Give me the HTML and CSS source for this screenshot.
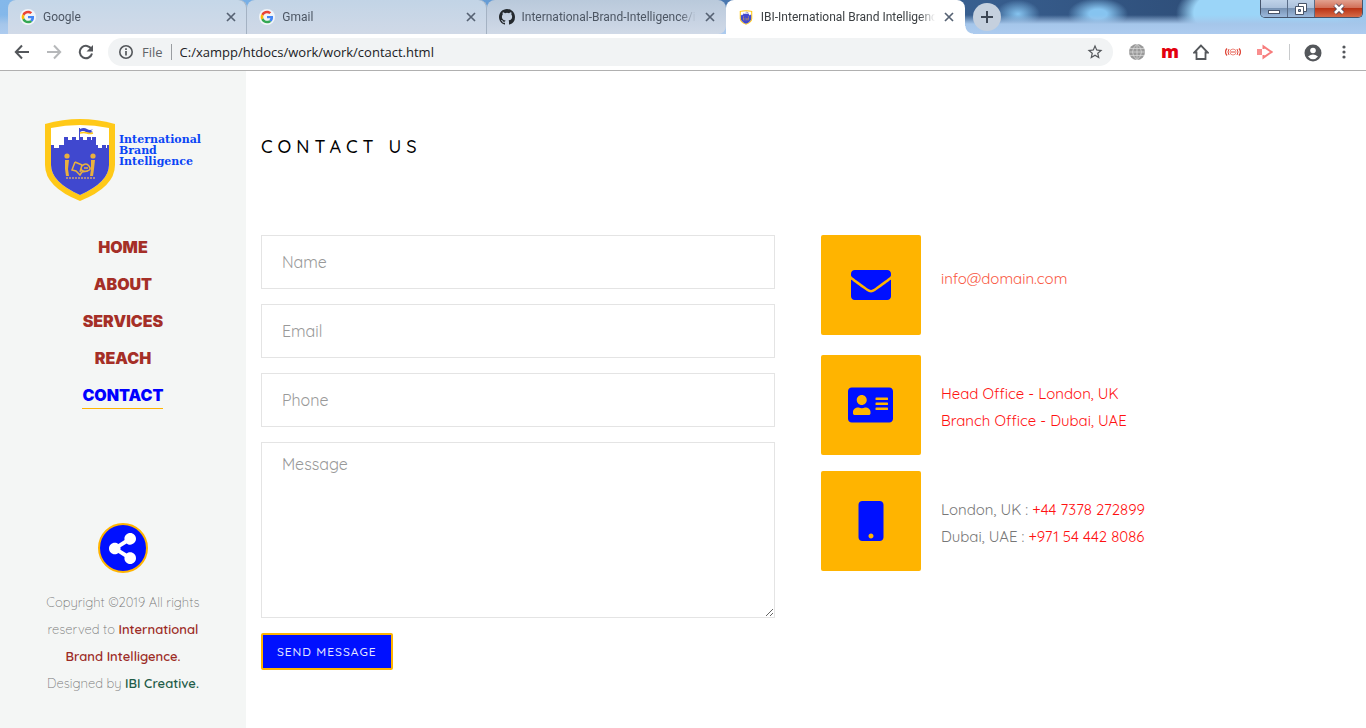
FILE: index.html
```html
<!DOCTYPE html>
<html lang="en">
<head>
<meta charset="utf-8">
<title>IBI-International Brand Intelligence</title>
<link rel="stylesheet" href="styles.css">
</head>
<body>
<svg class="defs" aria-hidden="true">
  <symbol id="google" viewBox="0 0 48 48">
    <circle cx="24" cy="24" r="24" fill="#fff" fill-opacity=".75"/>
    <g transform="translate(5 5) scale(.79)">
    <path fill="#EA4335" d="M24 9.5c3.54 0 6.71 1.22 9.21 3.6l6.85-6.85C35.9 2.38 30.47 0 24 0 14.62 0 6.51 5.38 2.56 13.22l7.98 6.19C12.43 13.72 17.74 9.5 24 9.5z"/>
    <path fill="#4285F4" d="M46.98 24.55c0-1.57-.15-3.09-.38-4.55H24v9.02h12.94c-.58 2.96-2.26 5.48-4.78 7.18l7.73 6c4.51-4.18 7.09-10.36 7.09-17.65z"/>
    <path fill="#FBBC05" d="M10.53 28.59c-.48-1.45-.76-2.99-.76-4.59s.27-3.14.76-4.59l-7.98-6.19C.92 16.46 0 20.12 0 24c0 3.88.92 7.54 2.56 10.78l7.97-6.19z"/>
    <path fill="#34A853" d="M24 48c6.48 0 11.93-2.13 15.89-5.81l-7.73-6c-2.15 1.45-4.92 2.3-8.16 2.3-6.26 0-11.57-4.22-13.47-9.91l-7.98 6.19C6.51 42.62 14.62 48 24 48z"/>
    </g>
  </symbol>
  <symbol id="close" viewBox="0 0 10 10"><path d="M1 1l8 8M9 1L1 9" fill="none" stroke="currentColor" stroke-width="1.7"/></symbol>
  <symbol id="shield" viewBox="0 0 70 84">
    <path d="M0 6Q18 1 35 1T70 6V47Q70 69 35 83Q0 69 0 47Z" fill="#ffc918"/>
    <path d="M6 10Q20 7 35 7T64 10V47Q64 64 35 77Q6 64 6 47Z" fill="#fff"/>
    <path d="M6 27h3v3h5v-3h5v-8h4v3h4v-3h4v3h3v-3h4v3h4v-3h4v3h1v-3h4v8h2v3h4v-3h4v3h1v-3h2V47Q64 64 35 77Q6 64 6 47Z" fill="#4048cf"/>
    <path d="M34 10h1v10h-1zM35 11q4-2 7 0t6 0l-2 2 2 1q-4 2-7 0t-6 0z" fill="#4048cf"/>
    <path d="M35 15q4-1 7 0t6 0" fill="none" stroke="#ffc918" stroke-width="1.4"/>
    <g fill="#e9b13e"><circle cx="22" cy="38" r="2.6"/><circle cx="48" cy="38" r="2.6"/>
    <path d="M20 42h4l-1 9 1 7h-3l-1-7zM46 42h4l-1 9-1 7h-3l1-7z"/></g>
    <path d="M30 44l-3 8 4 1 4 4 2-3 6-1M30 44l7 3-2 7M37 48q4-4 7 0t-2 5-6-2M39 50h4" fill="none" stroke="#e9b13e" stroke-width="1.5"/>
    <path d="M21 60h29" stroke="#a98a8e" stroke-width="2" stroke-dasharray="2 1"/>
  </symbol>
</svg>

<header class="browser">
  <div class="tabstrip">
    <div class="tabs">
      <div class="tab"><svg class="favicon"><use href="#google"/></svg><span class="tab-title">Google</span><button class="tab-close" aria-label="Close tab"><svg><use href="#close"/></svg></button></div>
      <div class="tab"><svg class="favicon"><use href="#google"/></svg><span class="tab-title">Gmail</span><button class="tab-close" aria-label="Close tab"><svg><use href="#close"/></svg></button></div>
      <div class="tab"><svg class="favicon" viewBox="0 0 16 16"><path fill="#24292e" d="M8 0C3.58 0 0 3.58 0 8c0 3.54 2.29 6.53 5.47 7.59.4.07.55-.17.55-.38 0-.19-.01-.82-.01-1.49-2.01.37-2.53-.49-2.69-.94-.09-.23-.48-.94-.82-1.13-.28-.15-.68-.52-.01-.53.63-.01 1.08.58 1.23.82.72 1.21 1.87.87 2.33.66.07-.52.28-.87.51-1.07-1.78-.2-3.64-.89-3.64-3.95 0-.87.31-1.59.82-2.15-.08-.2-.36-1.02.08-2.12 0 0 .67-.21 2.2.82a7.6 7.6 0 0 1 4 0c1.53-1.04 2.2-.82 2.2-.82.44 1.1.16 1.92.08 2.12.51.56.82 1.27.82 2.15 0 3.07-1.87 3.75-3.65 3.95.29.25.54.73.54 1.48 0 1.07-.01 1.93-.01 2.2 0 .21.15.46.55.38A8.01 8.01 0 0 0 16 8c0-4.42-3.58-8-8-8z"/></svg><span class="tab-title">International-Brand-Intelligence/i</span><button class="tab-close" aria-label="Close tab"><svg><use href="#close"/></svg></button></div>
      <div class="tab tab-active"><svg class="favicon"><use href="#shield"/></svg><span class="tab-title">IBI-International Brand Intelligence</span><button class="tab-close" aria-label="Close tab"><svg><use href="#close"/></svg></button></div>
    </div>
    <button class="new-tab" aria-label="New tab"><svg viewBox="0 0 12 12"><path d="M6 0v12M0 6h12" stroke="#3c4654" stroke-width="2"/></svg></button>
    <div class="window-controls">
      <button class="win" aria-label="Minimize"><svg viewBox="0 0 14 12"><rect x="1.500" y="7.500" width="11" height="3" fill="#fff" stroke="#485468"/></svg></button>
      <button class="win" aria-label="Restore"><svg viewBox="0 0 14 12"><path d="M4.500.5h8v8h-8z" fill="#fff" stroke="#485468"/><path d="M1.500 3.500h8v8h-8z" fill="#fff" stroke="#485468"/><path d="M4.500 6.500h2v2h-2z" fill="#90a8c4" stroke="#485468"/></svg></button>
      <button class="win win-close" aria-label="Close"><svg viewBox="0 0 14 12"><path d="M3 2l8 8M11 2l-8 8" stroke="#55495a" stroke-width="4.500"/><path d="M3 2l8 8M11 2l-8 8" stroke="#fff" stroke-width="2.600"/></svg></button>
    </div>
  </div>
  <div class="toolbar">
    <button class="tool" aria-label="Back"><svg viewBox="0 0 16 16"><path d="M15 8H2M8 1.500L1.800 8 8 14.500" fill="none" stroke="#54575b" stroke-width="2"/></svg></button>
    <button class="tool" aria-label="Forward"><svg viewBox="0 0 16 16"><path d="M1 8h13M8 1.500L14.200 8 8 14.500" fill="none" stroke="#b6b8ba" stroke-width="2"/></svg></button>
    <button class="tool" aria-label="Reload"><svg viewBox="0 0 16 16"><path d="M13.500 5.200A6.200 6.200 0 1 0 14 9.500" fill="none" stroke="#54575b" stroke-width="2"/><path d="M15 1v6.500H8.500z" fill="#54575b"/></svg></button>
    <div class="omnibox">
      <svg class="info" viewBox="0 0 16 16"><circle cx="8" cy="8" r="6.200" fill="none" stroke="#54575b" stroke-width="1.600"/><path d="M8 7v4.500M8 4.300v1.700" stroke="#54575b" stroke-width="1.700"/></svg>
      <span class="scheme">File</span>
      <input class="url" type="text" aria-label="Address" value="C:/xampp/htdocs/work/work/contact.html">
      <button class="star" aria-label="Bookmark"><svg viewBox="0 0 24 24"><path fill="#54575b" d="M22 9.240l-7.190-.62L12 2 9.190 8.630 2 9.240l5.460 4.730L5.820 21 12 17.270 18.180 21l-1.630-7.030L22 9.240zM12 15.400l-3.760 2.270 1-4.280-3.320-2.880 4.380-.38L12 6.100l1.710 4.040 4.380.38-3.320 2.880 1 4.280L12 15.400z"/></svg></button>
    </div>
    <div class="extensions">
      <button class="tool" aria-label="Globe"><svg viewBox="0 0 16 16"><circle cx="8" cy="8" r="8" fill="#999"/><path d="M0 8h16M8 0v16M1 4.500h14M1 11.500h14M8 0Q-1 8 8 16M8 0q9 8 0 16" fill="none" stroke="#d6d6d6" stroke-width=".8"/></svg></button>
      <button class="tool ext-m" aria-label="m extension">m</button>
      <button class="tool" aria-label="Home"><svg viewBox="0 0 16 16"><path d="M8 1.500L1.200 8.500H3.500V15h9V8.500h2.300z" fill="none" stroke="#54575b" stroke-width="1.800"/></svg></button>
      <button class="tool" aria-label="Broadcast"><svg viewBox="0 0 16 16"><g fill="none" stroke="#e04a3c"><circle cx="8" cy="8" r="3" stroke="#ee8a80"/><path d="M6 8h4M4 5q-2 3 0 6M12 5q2 3 0 6" stroke="#e04a3c"/><path d="M2 4.500q-3 3.500 0 7M14 4.500q3 3.500 0 7" stroke-width="1.300"/></g></svg></button>
      <button class="tool" aria-label="Video"><svg viewBox="0 0 16 16"><path d="M0 5h5v6H0z" fill="#f98e8e"/><path d="M6.500 5V2.500L14.500 8l-8 5.500V11" fill="none" stroke="#f77c7c" stroke-width="2"/></svg></button>
      <span class="divider"></span>
      <button class="tool tool-profile" aria-label="Profile"><svg viewBox="0 0 18 18"><circle cx="9" cy="9" r="8.500" fill="#54575b"/><circle cx="9" cy="6.500" r="2.800" fill="#fff"/><path d="M4 12.500q5-4 10 0-2 2.700-5 2.700t-5-2.700z" fill="#fff"/></svg></button>
      <button class="tool" aria-label="Menu"><svg viewBox="0 0 16 16" fill="#54575b"><circle cx="8" cy="3" r="1.600"/><circle cx="8" cy="8" r="1.600"/><circle cx="8" cy="13" r="1.600"/></svg></button>
    </div>
  </div>
</header>

<div class="page">
  <aside class="sidebar">
    <a class="logo" href="#"><svg class="logo-mark"><use href="#shield"/></svg><span class="logo-text">International<br>Brand<br>Intelligence</span></a>
    <nav class="menu">
      <a href="#">HOME</a>
      <a href="#">ABOUT</a>
      <a href="#">SERVICES</a>
      <a href="#">REACH</a>
      <a class="current" href="#">CONTACT</a>
    </nav>
    <button class="share" aria-label="Share"><svg viewBox="0 0 448 512"><path fill="#fff" d="M352 320c-22.608 0-43.387 7.819-59.790 20.895l-102.486-64.054a96.551 96.551 0 0 0 0-41.683l102.486-64.054C308.613 184.181 329.392 192 352 192c53.019 0 96-42.981 96-96S405.019 0 352 0s-96 42.981-96 96c0 7.158.790 14.130 2.276 20.841L155.790 180.895C139.387 167.819 118.608 160 96 160c-53.019 0-96 42.981-96 96s42.981 96 96 96c22.608 0 43.387-7.819 59.790-20.895l102.486 64.054A96.301 96.301 0 0 0 256 416c0 53.019 42.981 96 96 96s96-42.981 96-96-42.981-96-96-96z"/></svg></button>
    <p class="copyright">Copyright ©2019 All rights<br>reserved to <a class="brand" href="#">International<br>Brand Intelligence.</a><br>Designed by <a class="designer" href="#">IBI Creative.</a></p>
  </aside>

  <main class="content">
    <h1 class="title">CONTACT US</h1>
    <div class="columns">
      <form class="form">
        <input class="field" type="text" placeholder="Name" aria-label="Name">
        <input class="field" type="email" placeholder="Email" aria-label="Email">
        <input class="field" type="tel" placeholder="Phone" aria-label="Phone">
        <textarea class="field message" placeholder="Message" aria-label="Message"></textarea>
        <button class="send" type="button">SEND MESSAGE</button>
      </form>
      <div class="details">
        <section class="detail detail-mail">
          <div class="tile"><svg class="icon" viewBox="0 0 512 512"><path d="M502.300 190.800c3.900-3.100 9.700-.2 9.700 4.700V400c0 26.500-21.500 48-48 48H48c-26.500 0-48-21.500-48-48V195.600c0-5 5.700-7.800 9.700-4.700 22.400 17.400 52.100 39.500 154.100 113.600 21.100 15.400 56.700 47.800 92.200 47.600 35.700.3 72-32.800 92.300-47.600 102-74.100 131.600-96.300 154-113.700zM256 320c23.200.4 56.600-29.200 73.400-41.400 132.700-96.300 142.800-104.700 173.400-128.700 5.800-4.500 9.200-11.500 9.200-18.900v-19c0-26.500-21.500-48-48-48H48c-26.500 0-48 21.500-48 48v19c0 7.400 3.400 14.300 9.200 18.900 30.600 23.900 40.700 32.400 173.400 128.700 16.800 12.200 50.200 41.800 73.400 41.400z"/></svg></div>
          <p><a class="mail" href="#">info@domain.com</a></p>
        </section>
        <section class="detail">
          <div class="tile"><svg class="icon icon-card" viewBox="0 0 576 512"><path d="M528 32H48C21.500 32 0 53.500 0 80v352c0 26.500 21.500 48 48 48h480c26.500 0 48-21.500 48-48V80c0-26.500-21.500-48-48-48zm-352 96c35.300 0 64 28.700 64 64s-28.700 64-64 64-64-28.700-64-64 28.700-64 64-64zm112 236.800c0 10.600-10 19.200-22.400 19.200H86.400C74 384 64 375.400 64 364.800v-19.200c0-31.800 30.100-57.600 67.200-57.600h5c12.300 5.100 25.700 8 39.800 8s27.600-2.900 39.800-8h5c37.100 0 67.200 25.800 67.200 57.600v19.200zM512 312c0 4.400-3.600 8-8 8H360c-4.400 0-8-3.600-8-8v-16c0-4.400 3.600-8 8-8h144c4.400 0 8 3.600 8 8v16zm0-64c0 4.400-3.600 8-8 8H360c-4.400 0-8-3.600-8-8v-16c0-4.400 3.600-8 8-8h144c4.400 0 8 3.600 8 8v16zm0-64c0 4.400-3.600 8-8 8H360c-4.400 0-8-3.600-8-8v-16c0-4.400 3.600-8 8-8h144c4.400 0 8 3.600 8 8v16z"/></svg></div>
          <p><a href="#">Head Office - London, UK</a><br><a href="#">Branch Office - Dubai, UAE</a></p>
        </section>
        <section class="detail">
          <div class="tile"><svg class="icon" viewBox="0 0 512 512"><path transform="translate(96)" d="M272 0H48C21.500 0 0 21.500 0 48v416c0 26.500 21.500 48 48 48h224c26.500 0 48-21.500 48-48V48c0-26.500-21.500-48-48-48zM160 480c-17.700 0-32-14.300-32-32s14.300-32 32-32 32 14.300 32 32-14.300 32-32 32z"/></svg></div>
          <p>London, UK : <a href="#">+44 7378 272899</a><br>Dubai, UAE : <a href="#">+971 54 442 8086</a></p>
        </section>
      </div>
    </div>
  </main>
</div>
</body>
</html>
```
FILE: styles.css
```css
* { box-sizing: border-box; }
html, body { margin: 0; }
body {
  display: flex;
  flex-direction: column;
  min-height: 100vh;
  background: #fff;
  font-family: Quicksand, Lato, sans-serif;
  font-weight: 300;
  color: #777;
}
button { margin: 0; padding: 0; border: 0; background: none; font: inherit; color: inherit; }
a { text-decoration: none; }
p { margin: 0; }
.defs { position: absolute; width: 0; height: 0; }

/* Browser window */
.browser { font-family: "Segoe UI", "Open Sans", sans-serif; font-weight: 400; border-bottom: 1px solid #b0b0b0; }
.tabstrip {
  display: flex;
  height: 34px;
  padding-left: 8px;
  background:
    linear-gradient(rgba(165, 198, 234, 0) 15px, #a5c6ea 24px, #adcbef),
    radial-gradient(ellipse 22px 14px at 1018px 14px, #86c4f0, rgba(134, 196, 240, 0)),
    radial-gradient(ellipse 30px 16px at 1098px 14px, #86c4f0 30%, rgba(134, 196, 240, 0)),
    radial-gradient(ellipse 90px 40px at 1266px 13px, #9bd5f8 80%, rgba(155, 213, 248, 0)),
    linear-gradient(90deg, #84b8ea, #6fa9e2 400px, #4a78b0 720px, #385f90 960px, #2f4f7a 1190px, #9cc8ee 1340px);
}
.tabs { display: flex; flex: 0 1 957px; min-width: 0; }
.tab {
  display: flex;
  flex: 1 1 0;
  align-items: center;
  min-width: 0;
  padding: 0 10px 0 12px;
  border-radius: 8px 8px 0 0;
  background: linear-gradient(#c5d7e8, #d1dae8);
  color: #4c5663;
  font-size: 12px;
}
.tab:nth-child(2) { background: linear-gradient(#c2d4e6, #d0d9e7); }
.tab:nth-child(3) { background: linear-gradient(#b9c9db, #d0d9e7); border-bottom-right-radius: 8px; }
.tab:nth-child(-n+2) { box-shadow: inset -1px 0 #a4b2c3; }
.tab-active { position: relative; background: #fff; color: #3c4043; }
.tab:nth-child(4) .favicon { height: 15px; }
.tab-active::after {
  content: "";
  position: absolute;
  right: -8px;
  bottom: 0;
  width: 8px;
  height: 8px;
  background: radial-gradient(circle at 100% 0, transparent 7px, #fff 8px);
}
.favicon { flex: none; width: 16px; height: 16px; }
.tab-title {
  flex: 1;
  min-width: 0;
  margin: 0 8px 0 7px;
  overflow: hidden;
  font-family: "Segoe UI", Roboto, sans-serif;
  white-space: nowrap;
  -webkit-mask-image: linear-gradient(90deg, #000 calc(100% - 16px), transparent);
  mask-image: linear-gradient(90deg, #000 calc(100% - 16px), transparent);
}
.tab-close { width: 12px; height: 12px; color: #566273; }
.tab-close svg { display: block; width: 10px; height: 10px; margin: 1px; }
.new-tab {
  display: grid;
  place-items: center;
  flex: none;
  width: 28px;
  height: 28px;
  margin: 3px 0 0 8px;
  border-radius: 50%;
  background: #c5d0de;
}
.new-tab svg { width: 12px; height: 12px; }
.window-controls {
  display: flex;
  flex: none;
  height: 18px;
  margin: 0 3px 0 auto;
  overflow: hidden;
  border: 1px solid #45546c;
  border-top: 0;
  border-radius: 0 0 5px 5px;
}
.win {
  display: grid;
  place-items: center;
  width: 27px;
  border-right: 1px solid #596d88;
  background: linear-gradient(#bfd2e8, #abc1dc 45%, #7893b4 50%, #9bb9dc);
}
.win svg { width: 14px; height: 12px; }
.win-close { width: 47px; border: 0; background: linear-gradient(#e2a18f, #d27059 45%, #ba3416 50%, #d66b48); }

.toolbar { display: flex; align-items: center; height: 36px; padding: 0 14px; background: #fff; }
.tool { display: grid; place-items: center; flex: none; width: 16px; height: 16px; margin-right: 16px; }
.tool svg { width: 16px; height: 16px; }
.tool-profile svg { width: 18px; height: 18px; }
.omnibox {
  display: flex;
  flex: 1;
  align-items: center;
  min-width: 0;
  height: 28px;
  margin-left: -2px;
  padding: 0 9px 0 10px;
  border-radius: 14px;
  background: #f1f3f4;
}
.info { flex: none; width: 16px; height: 16px; }
.scheme { padding: 0 8px; border-right: 1px solid #9a9da1; color: #5f6368; font-size: 13px; line-height: 16px; }
.url { flex: 1; min-width: 0; padding: 0 0 0 8px; border: 0; outline: 0; background: none; color: #202124; font: inherit; font-size: 13px; }
.star svg { display: block; width: 18px; height: 18px; }
.extensions { display: flex; align-items: center; margin-left: 16px; }
.extensions .tool:last-child { margin-right: 0; }
.ext-m { color: #e3000f; font-family: "Open Sans", sans-serif; font-size: 18px; font-weight: 800; line-height: 14px; align-content: start; }
.divider { width: 1px; height: 16px; margin: 0 14px 0 0; background: #c8cacc; }

/* Site */
.page { display: flex; flex: 1; }
.sidebar {
  display: flex;
  flex: 0 0 18%;
  flex-direction: column;
  align-items: center;
  padding: 47px 15px 30px;
  background: #f4f6f5;
  text-align: center;
}
.logo { display: flex; gap: 4px; color: #0a45f5; }
.logo-mark { width: 70px; height: 84px; }
.logo-text { padding-top: 16px; font-family: Georgia, "DejaVu Serif", serif; font-size: 11px; font-weight: 700; line-height: 11px; text-align: left; }
.menu { display: flex; flex-direction: column; align-items: center; gap: 10px; margin-top: 32px; }
.menu a { color: #a52f27; font-family: Inter, sans-serif; font-size: 16px; font-weight: 900; line-height: 26px; border-bottom: 1px solid transparent; }
.menu a.current { color: #00f; border-bottom-color: #ffb400; }
.share {
  display: grid;
  place-items: center;
  width: 50px;
  height: 50px;
  margin-top: 114px;
  border: 2px solid #ffb400;
  border-radius: 50%;
  background: #0010ff;
}
.share svg { width: 27px; height: 31px; }
.copyright { margin-top: 16px; font-size: 13px; line-height: 27px; white-space: nowrap; }
.copyright a { font-weight: 600; }
.brand { color: #9c2b25; }
.designer { color: #1f5c48; }

.content { flex: 1; min-width: 0; padding: 58px 15px 30px; }
.title { margin: 0 0 70px; color: #000; font-size: 18px; font-weight: 500; line-height: 36px; letter-spacing: 5px; }
.columns { display: grid; grid-template-columns: minmax(0, 514fr) minmax(0, 530fr); gap: 46px; }
.form { display: flex; flex-direction: column; align-items: flex-start; gap: 15px; }
.field {
  width: 100%;
  height: 54px;
  padding: 8px 20px;
  border: 1px solid #e4e4e4;
  border-radius: 0;
  outline: 0;
  background: #fff;
  color: #555;
  font: inherit;
  font-size: 16px;
  font-weight: 400;
  line-height: 27px;
}
.field::placeholder { color: #999; }
.message { display: block; height: 176px; resize: vertical; }
.send {
  padding: 0 14px;
  border: 2px solid #ffb400;
  border-radius: 2px;
  background: #0010ff;
  color: #e6e8ff;
  font-size: 12px;
  font-weight: 500;
  line-height: 33px;
  letter-spacing: 1px;
}
.detail { display: flex; gap: 20px; margin-bottom: 16px; font-size: 15px; font-weight: 400; line-height: 27px; }
.detail p { padding-top: 25px; }
.detail-mail { margin-bottom: 20px; }
.detail-mail p { padding-top: 30px; }
.detail a { color: #f11; }
.detail .mail { color: #f9573f; }
.tile { display: grid; place-items: center; flex: none; width: 100px; height: 100px; border-radius: 2px; background: #ffb400; }
.icon { width: 40px; height: 40px; fill: #0010ff; }
.icon-card { width: 45px; }
```
